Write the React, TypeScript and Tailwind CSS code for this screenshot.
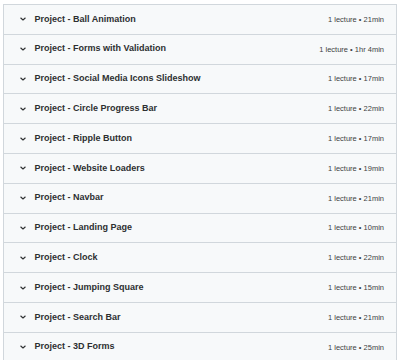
const sections: [string, string][] = [
  ["Project - Ball Animation", "1 lecture • 21min"],
  ["Project - Forms with Validation", "1 lecture • 1hr 4min"],
  ["Project - Social Media Icons Slideshow", "1 lecture • 17min"],
  ["Project - Circle Progress Bar", "1 lecture • 22min"],
  ["Project - Ripple Button", "1 lecture • 17min"],
  ["Project - Website Loaders", "1 lecture • 19min"],
  ["Project - Navbar", "1 lecture • 21min"],
  ["Project - Landing Page", "1 lecture • 10min"],
  ["Project - Clock", "1 lecture • 22min"],
  ["Project - Jumping Square", "1 lecture • 15min"],
  ["Project - Search Bar", "1 lecture • 21min"],
  ["Project - 3D Forms", "1 lecture • 25min"],
];

const Chevron = () => (
  <svg width="8" height="8" viewBox="0 0 8 8" fill="none">
    <path d="M1.8 3 L4 5 L6.2 3" stroke="#2d2f31" strokeWidth="1.1" strokeLinecap="round" strokeLinejoin="round" />
  </svg>
);

export default function App() {
  return (
    <div className="w-[400px] h-[360px] overflow-hidden bg-white pt-[4px] px-[3px] font-['Liberation_Sans',Arial,sans-serif]">
      <div className="border-x border-t border-[#d1d7dc]">
        {sections.map(([title, meta]) => (
          <div
            key={title}
            className="h-[29.8px] box-border flex items-center border-b border-[#d1d7dc] bg-[#f7f9fa] pl-[15px] pr-[12px]"
          >
            <Chevron />
            <span className="ml-[7.5px] text-[9px] font-bold text-[#2d2f31]">{title}</span>
            <span className="ml-auto text-[7.5px] text-[#3e4143]">{meta}</span>
          </div>
        ))}
      </div>
    </div>
  );
}
